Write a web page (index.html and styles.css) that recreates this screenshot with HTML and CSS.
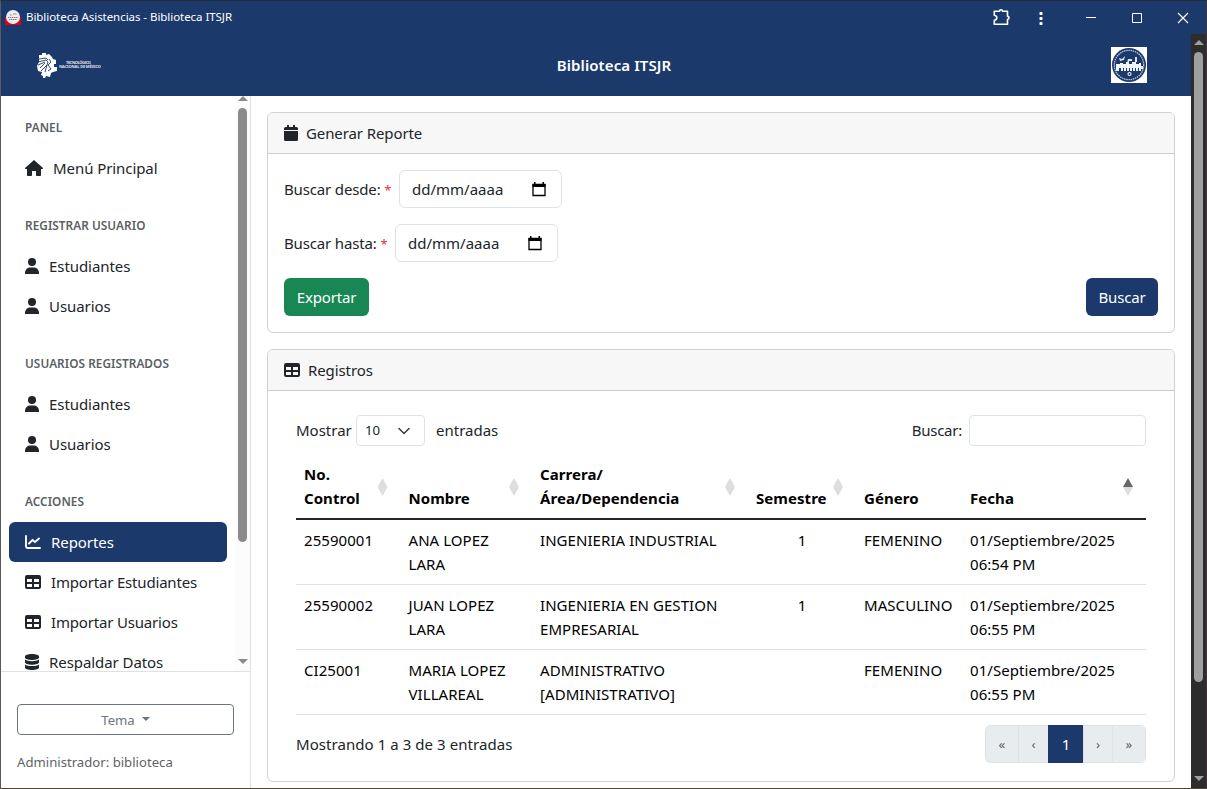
FILE: index.html
```html
<!DOCTYPE html>
<html lang="es">
<head>
<meta charset="utf-8">
<title>Biblioteca Asistencias - Biblioteca ITSJR</title>
<link rel="stylesheet" href="styles.css">
</head>
<body>
<svg class="sprite" width="0" height="0">
  <symbol id="user" viewBox="0 0 14 16"><circle cx="7" cy="4" r="4"/><path d="M0 16v-1c0-3 2-5.500 5-5.500h4c3 0 5 2.500 5 5.500v1z"/></symbol>
  <symbol id="table" viewBox="0 0 16 16"><path fill-rule="evenodd" d="M2 1h12a2 2 0 0 1 2 2v10a2 2 0 0 1-2 2H2a2 2 0 0 1-2-2V3a2 2 0 0 1 2-2zM2 5v3h5V5zM9 5v3h5V5zM2 10v3h5v-3zM9 10v3h5v-3z"/></symbol>
  <symbol id="home" viewBox="0 0 18 16"><path d="M9 0L0 8c0 .8.400 1 1 1h1v6c0 .6.400 1 1 1h3c.6 0 1-.4 1-1v-4h4v4c0 .6.400 1 1 1h3c.6 0 1-.4 1-1V9h1c.6 0 1-.3 1-1z"/></symbol>
  <symbol id="chart" viewBox="0 0 16 16"><path d="M1 2v10.500q0 1.500 1.500 1.500H15M4 9.500L7.500 6l2.500 2L14 4.500" fill="none" stroke="currentColor" stroke-width="1.900" stroke-linecap="round"/></symbol>
  <symbol id="database" viewBox="0 0 14 16"><path d="M0 2.500C0 1 3 0 7 0s7 1 7 2.500v1C14 5 11 6 7 6S0 5 0 3.500zM0 5.600C1.500 6.700 4 7.200 7 7.200s5.500-.5 7-1.600v2.600C14 9.700 11 10.700 7 10.700S0 9.700 0 8.200zM0 10.500C1.500 11.600 4 12.100 7 12.100s5.500-.5 7-1.600v3c0 1.500-3 2.500-7 2.500s-7-1-7-2.500z"/></symbol>
  <symbol id="calendar" viewBox="0 0 14 16"><path d="M3 0h2v2h4V0h2v2h1.500Q14 2 14 3.500V5H0V3.500Q0 2 1.500 2H3zM0 6h14v8.500q0 1.500-1.500 1.500h-11Q0 16 0 14.500z"/></symbol>
  <symbol id="picker" viewBox="0 0 14 15"><path d="M1 2.500h12v11H1z" fill="none" stroke="currentColor" stroke-width="1.300"/><path d="M.5 2h13v3H.5zM2 0h1.500v3H2zM10.500 0H12v3h-1.500z"/></symbol>
</svg>
<div class="window">
  <header class="titlebar">
    <svg class="favicon" width="16" height="16" viewBox="0 0 16 16"><path fill="#153a75" d="M0 0h16v8H0z"/><path fill="#e1001a" d="M0 8h16v8H0z"/><circle cx="8" cy="8" r="7" fill="#eee"/><path d="M3 8.500h10M5 6h2M8 5h4M4 10.500h8" stroke="#8a7b82" stroke-dasharray="1.500 .5"/></svg>
    <span class="wintitle">Biblioteca Asistencias - Biblioteca ITSJR</span>
    <svg class="controls" width="200" height="32" viewBox="0 0 200 32" fill="none" stroke="#fff"><path stroke-width="1.600" stroke-linejoin="round" d="M3.300 10.200h5.200a1.500 1.500 0 0 1 3 0h5v5a1.500 1.500 0 0 1 0 3v5H3.300v-4c3.300-.5 3.300-4.500 0-5z"/><path stroke="none" fill="#fff" d="M49 11h2l.5.5v2l-.5.5h-2l-.5-.5v-2zM49 16h2l.5.5v2l-.5.5h-2l-.5-.5v-2zM49 21h2l.5.5v2l-.5.5h-2l-.5-.5v-2z"/><path d="M95 16.500h10M141.500 12.500h9v9h-9z"/><path stroke-width="1.200" d="M187 12l10 10M197 12l-10 10"/></svg>
  </header>
  <div class="viewport">
    <div class="app">
      <nav class="topbar">
        <svg class="logo" width="66" height="28" viewBox="0 0 66 28" fill="#fff"><path d="M3 4h3V2h4v2l3-1 3 3 1 2 3 1v4h-2v3h3v4l-4 1-2 1-1 4-4-1-1 2H7v-2l-2-1 1-3-4-1-1-5 2-4z"/><path d="M3 8l7-1 2 2M2 11l8-2 2 2M2 14l7-3M5 20l6-6 1-3M9 21l2-7M4 17l5-5M13 8l2 3-3 3 3 4-3 2" fill="none" stroke="#1b396a" stroke-width=".9"/><text x="30" y="12.500" textLength="25">TECNOLÓGICO</text><text x="23" y="17" textLength="42">NACIONAL DE MÉXICO</text></svg>
        <b>Biblioteca ITSJR</b>
        <svg class="seal" width="36" height="36" viewBox="0 0 36 36"><path fill="#fff" d="M0 0h36v36H0z"/><circle cx="18" cy="18" r="17" fill="#1b396a"/><circle cx="18" cy="18" r="14.700" fill="none" stroke="#b9c5d6" stroke-width="1.300" stroke-dasharray="1.500 .7"/><path d="M5 17h4v-1h3v1h3v-2h3v2h3v-2h4v2h3v-1h2v3h2v3h-2v2h-2v-3h-1v3h-2v-3h-1v3h-2v-3h-1v3h-2v-3h-1v3h-2v-3h-1v3h-2v-3h-1v3h-2v-3h-1v3H9v-3H8v3H5z" fill="#f2f5f8"/><path d="M8 11l3 1 3-3-1 4-4 1zM17 12h4v2h-3v2h-2zM24 10h2v5h-2z" fill="#dce3ed"/><circle cx="18.500" cy="27" r="1.500" fill="none" stroke="#e3e9f0" stroke-width="1.200"/></svg>
      </nav>
      <div class="columns">
        <aside class="sidebar">
          <div class="menuarea">
            <div class="menu">
              <h6>PANEL</h6>
              <a><svg width="18" height="16"><use href="#home"/></svg><span>Menú Principal</span></a>
              <h6>REGISTRAR USUARIO</h6>
              <a><svg width="14" height="16"><use href="#user"/></svg><span>Estudiantes</span></a>
              <a><svg width="14" height="16"><use href="#user"/></svg><span>Usuarios</span></a>
              <h6>USUARIOS REGISTRADOS</h6>
              <a><svg width="14" height="16"><use href="#user"/></svg><span>Estudiantes</span></a>
              <a><svg width="14" height="16"><use href="#user"/></svg><span>Usuarios</span></a>
              <h6>ACCIONES</h6>
              <a class="active"><svg width="16" height="16"><use href="#chart"/></svg><span>Reportes</span></a>
              <a><svg width="16" height="16"><use href="#table"/></svg><span class="tight">Importar Estudiantes</span></a>
              <a><svg width="16" height="16"><use href="#table"/></svg><span class="tight">Importar Usuarios</span></a>
              <a><svg width="14" height="16"><use href="#database"/></svg><span>Respaldar Datos</span></a>
            </div>
            <div class="scroll light"><i class="up"></i><div class="thumb"></div><i class="down"></i></div>
          </div>
          <footer class="sidefoot">
            <button class="theme">Tema <i class="caret"></i></button>
            <span>Administrador: biblioteca</span>
          </footer>
        </aside>
        <main class="content">
          <section class="card">
            <div class="cardhead"><svg width="14" height="16"><use href="#calendar"/></svg><span>Generar Reporte</span></div>
            <div class="form">
              <div class="field"><label class="l1">Buscar desde: <em>*</em></label><div class="date"><span>dd/mm/aaaa</span><svg width="14" height="15"><use href="#picker"/></svg></div></div>
              <div class="field"><label class="l2">Buscar hasta: <em>*</em></label><div class="date"><span>dd/mm/aaaa</span><svg width="14" height="15"><use href="#picker"/></svg></div></div>
              <div class="actions"><button class="btn green">Exportar</button><button class="btn blue">Buscar</button></div>
            </div>
          </section>
          <section class="card">
            <div class="cardhead"><svg width="16" height="16"><use href="#table"/></svg><span>Registros</span></div>
            <div class="records">
              <div class="tools">
                <div class="length"><span class="show">Mostrar</span><div class="select"><span>10</span><svg width="12" height="8" viewBox="0 0 12 8"><path d="M1 1.500l5 5 5-5" fill="none" stroke="#343a40" stroke-width="1.500" stroke-linecap="round"/></svg></div><span class="entries">entradas</span></div>
                <div class="search"><span>Buscar:</span><div class="input"></div></div>
              </div>
              <table>
                <colgroup><col class="c1"><col class="c2"><col class="c3"><col class="c4"><col class="c5"><col class="c6"></colgroup>
                <thead><tr><th>No.<br>Control<i class="sort"></i></th><th>Nombre<i class="sort"></i></th><th>Carrera/<br>Área/Dependencia<i class="sort"></i></th><th>Semestre<i class="sort"></i></th><th>Género</th><th>Fecha<i class="sort asc"></i></th></tr></thead>
                <tbody>
                  <tr><td>25590001</td><td>ANA LOPEZ<br>LARA</td><td>INGENIERIA INDUSTRIAL</td><td class="num">1</td><td>FEMENINO</td><td>01/Septiembre/2025<br>06:54 PM</td></tr>
                  <tr><td>25590002</td><td>JUAN LOPEZ<br>LARA</td><td>INGENIERIA EN GESTION<br>EMPRESARIAL</td><td class="num">1</td><td>MASCULINO</td><td>01/Septiembre/2025<br>06:55 PM</td></tr>
                  <tr><td>CI25001</td><td>MARIA LOPEZ<br>VILLAREAL</td><td>ADMINISTRATIVO<br>[ADMINISTRATIVO]</td><td></td><td>FEMENINO</td><td>01/Septiembre/2025<br>06:55 PM</td></tr>
                </tbody>
              </table>
              <div class="tablefoot"><span>Mostrando 1 a 3 de 3 entradas</span><div class="pages"><a>«</a><a>‹</a><a class="current">1</a><a>›</a><a>»</a></div></div>
            </div>
          </section>
        </main>
      </div>
    </div>
    <div class="scroll dark"><i class="up"></i><div class="thumb"></div><i class="down"></i></div>
  </div>
</div>
</body>
</html>
```
FILE: styles.css
```css
* { box-sizing: border-box; }
body { margin: 0; height: 789px; overflow: hidden; font: 15px/24px "Noto Sans", "Open Sans", sans-serif; color: #212529; background: #fff; }
svg { flex: none; fill: currentColor; }
i, em { font-style: normal; }
span, label, th, td, button { white-space: nowrap; }
.sprite { position: absolute; }
.window { height: 789px; border: 1px solid #5a5a5a; border-top-color: #262d38; border-right-color: #40333a; border-bottom-color: #51452f; display: flex; flex-direction: column; }
.titlebar { height: 33px; flex: none; background: #1b396a; color: #fff; display: flex; align-items: center; padding: 0 0 2px 4px; font-size: 11.500px; letter-spacing: -.05px; }
.wintitle { margin-left: 5px; }
.controls { margin-left: auto; margin-right: 15px; fill: none; }
.viewport { flex: 1; min-height: 0; display: flex; }
.app { flex: 1; display: flex; flex-direction: column; min-width: 0; }
.topbar { height: 62px; flex: none; background: #1b396a; color: #fff; display: flex; align-items: center; justify-content: space-between; padding: 0 44px 0 35px; }
.topbar b { font-weight: 600; font-size: 15px; margin-left: 15px; letter-spacing: .1px; }
.logo text { font: bold 4px "Noto Sans", sans-serif; opacity: .85; }
.columns { flex: 1; min-height: 0; display: flex; }
.sidebar { width: 250px; flex: none; border-right: 1px solid #dee2e6; display: flex; flex-direction: column; }
.menuarea { height: 576px; flex: none; display: flex; border-bottom: 1px solid #dee2e6; overflow: hidden; }
.menu { flex: 1; padding: 0 8px; }
.menu h6 { margin: 0; padding: 22px 16px 10px; height: 52px; font-size: 11.800px; line-height: 19px; font-weight: 600; color: #5b5f63; letter-spacing: .05px; }
.menu a + h6 { margin-top: 6px; }
.menu a { height: 40px; display: flex; align-items: center; gap: 10px; padding: 0 16px; border-radius: 6px; letter-spacing: -.07px; }
.menu .tight { letter-spacing: -.18px; }
.menu .active { background: #1b396a; color: #fff; }
.scroll { width: 15px; flex: none; display: flex; flex-direction: column; align-items: center; background: #fcfcfc; color: #8b8b8b; }
.scroll i { border: 5px solid transparent; width: 0; height: 0; }
.scroll .up { border-top: 0; border-bottom-color: currentColor; }
.scroll .down { border-bottom: 0; border-top-color: currentColor; margin-top: auto; margin-bottom: 7px; }
.scroll .thumb { width: 9px; background: currentColor; border-radius: 5px; }
.light .thumb { height: 434px; margin-top: 7px; }
.dark { background: #2c2c2c; color: #9f9f9f; }
.dark .up { margin-top: 6px; }
.dark .thumb { height: 630px; margin-top: 7px; }
.sidefoot { padding: 32px 16px; color: #6c757d; font-size: 13.150px; }
.sidefoot span { display: block; margin-top: 15px; color: #5f6367; }
.theme { width: 217px; height: 31px; border: 1px solid #6c757d; border-radius: 4px; background: #fff; color: #6c757d; font: inherit; display: flex; align-items: center; justify-content: center; gap: 7px; padding: 0; }
.caret { border: 4px solid transparent; border-top-color: currentColor; border-bottom: 0; margin-bottom: 2px; }
.content { flex: 1; padding: 16px; display: flex; flex-direction: column; gap: 16px; }
.card { border: 1px solid #d0d1d2; border-radius: 6px; }
.cardhead { height: 41px; background: #f7f7f7; border-bottom: 1px solid #cbcccd; border-radius: 5px 5px 0 0; display: flex; align-items: center; gap: 8px; padding: 0 16px; letter-spacing: -.1px; }
.form { padding: 16px; display: flex; flex-direction: column; gap: 16px; }
.field { display: flex; align-items: center; letter-spacing: -.15px; }
.field em { color: #dc3545; font-size: 13px; }
.l1 { width: 115px; }
.l2 { width: 111px; }
.date { width: 163px; height: 38px; border: 1px solid #dee2e6; border-radius: 6px; display: flex; align-items: center; justify-content: space-between; padding: 0 15px 0 12px; letter-spacing: 0; }
.date svg { color: #000; }
.actions { display: flex; justify-content: space-between; }
.btn { height: 38px; border: 0; border-radius: 6px; color: #fff; font: inherit; padding: 0; letter-spacing: -.15px; }
.green { width: 85px; background: #198754; }
.blue { width: 72px; background: #1b396a; }
.records { padding: 24px 28px 18px; }
.tools { height: 31px; display: flex; justify-content: space-between; }
.length, .search { display: flex; align-items: center; }
.tools span { margin-top: -1px; }
.show { width: 60px; }
.select { width: 69px; height: 31px; border: 1px solid #dee2e6; border-radius: 4px; display: flex; align-items: center; justify-content: space-between; padding: 0 14px 0 8px; font-size: 13.200px; }
.entries { margin-left: 11px; }
.search { letter-spacing: -.25px; }
.input { width: 177px; height: 31px; border: 1px solid #dee2e6; border-radius: 4px; margin-left: 7px; }
table { width: 850px; margin-top: 8px; table-layout: fixed; border-collapse: separate; border-spacing: 0; color: #000; }
.c1 { width: 104.500px; } .c2 { width: 131.500px; } .c3 { width: 216px; } .c4 { width: 108px; } .c5 { width: 106px; } .c6 { width: 184px; }
th { position: relative; height: 66px; padding: 8px; text-align: left; vertical-align: bottom; font-weight: 700; letter-spacing: .05px; border-bottom: 2px solid #212529; }
td { height: 65px; padding: 8px; vertical-align: top; border-bottom: 1px solid #dee2e6; letter-spacing: .06px; }
.num { text-align: center; }
.sort { position: absolute; right: 13px; top: 24px; width: 10px; height: 18px; background: #dedede; clip-path: polygon(50% 0, 100% 50%, 50% 100%, 0 50%); }
.asc { background: linear-gradient(#666 50%, #dedede 50%); }
.tablefoot { display: flex; justify-content: space-between; margin-top: 10px; height: 38px; align-items: center; letter-spacing: .06px; }
.pages { display: flex; }
.pages a { height: 38px; width: 30px; display: grid; place-items: center; background: #e9ecef; border: 1px solid #dee2e6; border-width: 1px 0 1px 1px; color: #595e63; font-size: 13.200px; }
.pages a:first-child { width: 33px; border-radius: 6px 0 0 6px; }
.pages a:last-child { width: 34px; border-right-width: 1px; border-radius: 0 6px 6px 0; }
.pages .current { width: 35px; background: #1b396a; border-color: #1b396a; color: #fff; font-size: 15px; }
.pages .current + a { width: 29px; }
```
